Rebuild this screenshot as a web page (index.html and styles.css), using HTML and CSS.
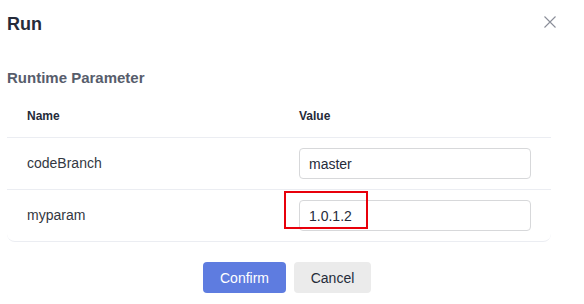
FILE: index.html
```html
<!DOCTYPE html>
<html lang="en">
<head>
  <meta charset="UTF-8" />
  <meta name="viewport" content="width=device-width, initial-scale=1.0"/>
  <title>Run</title>
  <link rel="stylesheet" href="styles.css">
</head>
<body>

  <div class="dialog">
    <header class="dialog-header">
      <h1>Run</h1>
      <button class="close" aria-label="Close">
        <svg width="12" height="12" viewBox="0 0 12 12">
          <path d="M0.5 0.5 L11.5 11.5 M11.5 0.5 L0.5 11.5" stroke="#8a8e99" stroke-width="1.1" fill="none"/>
        </svg>
      </button>
    </header>

    <h2 class="section-title">Runtime Parameter</h2>

    <div class="param-table">
      <div class="row head">
        <div class="cell">Name</div>
        <div class="cell">Value</div>
      </div>
      <div class="row">
        <div class="cell">codeBranch</div>
        <div class="cell"><input type="text" value="master"></div>
      </div>
      <div class="row last">
        <div class="cell">myparam</div>
        <div class="cell"><input type="text" value="1.0.1.2"></div>
      </div>
    </div>

    <div class="dialog-footer">
      <button class="button primary">Confirm</button>
      <button class="button">Cancel</button>
    </div>
  </div>

  <!-- annotation -->
  <div class="highlight"></div>

</body>
</html>
```

FILE: styles.css
```css
body {
  margin: 0;
  font-family: 'Liberation Sans', Arial, sans-serif;
  background: #fff;
  color: #252b3a;
}

.dialog {
  width: 584px;
  height: 304px;
  padding: 0 7px;
  box-sizing: border-box;
}

.dialog-header {
  display: flex;
  justify-content: space-between;
  align-items: flex-start;
  padding: 12px 21px 8px 0;
  height: 24px;
}

.dialog-header h1 {
  margin: 0;
  font-size: 18px;
  line-height: 24px;
  font-weight: bold;
  color: #252b3a;
}

.close {
  margin-top: 4px;
  padding: 0;
  border: none;
  background: none;
  width: 12px;
  height: 12px;
  cursor: pointer;
}

.close svg {
  display: block;
}

.section-title {
  margin: 24px 0 6px;
  font-size: 15px;
  line-height: 20px;
  font-weight: bold;
  color: #575d6c;
}

.param-table {
  width: 544px;
  border-bottom: 1px solid #ebedf2;
  border-radius: 0 0 8px 8px;
}

.row {
  display: grid;
  grid-template-columns: 1fr 1fr;
  border-bottom: 1px solid #ebedf2;
}

.row.last {
  border-bottom: none;
}

.cell {
  padding: 10px 20px;
  font-size: 14px;
  line-height: 31px;
  color: #333842;
}

.row.head .cell {
  padding: 13px 20px 12px;
  font-size: 12px;
  line-height: 18px;
  font-weight: bold;
  color: #252b3a;
}

.cell input {
  display: block;
  box-sizing: border-box;
  width: 100%;
  height: 31px;
  padding: 0 9px;
  border: 1px solid #d7d8da;
  border-radius: 4px;
  font-family: inherit;
  font-size: 14px;
  color: #252b3a;
  outline: none;
}

.dialog-footer {
  display: flex;
  justify-content: center;
  gap: 8px;
  margin-top: 20px;
  padding-right: 10px;
}

.button {
  width: 77px;
  height: 31px;
  padding: 0;
  border: none;
  border-radius: 4px;
  background: #ebebeb;
  color: #252b3a;
  font-family: inherit;
  font-size: 14px;
  cursor: pointer;
}

.button.primary {
  width: 83px;
  background: #5e7ce0;
  color: #fff;
}

.highlight {
  position: absolute;
  left: 284px;
  top: 191px;
  width: 80px;
  height: 34px;
  border: 2px solid #e8000b;
}
```
